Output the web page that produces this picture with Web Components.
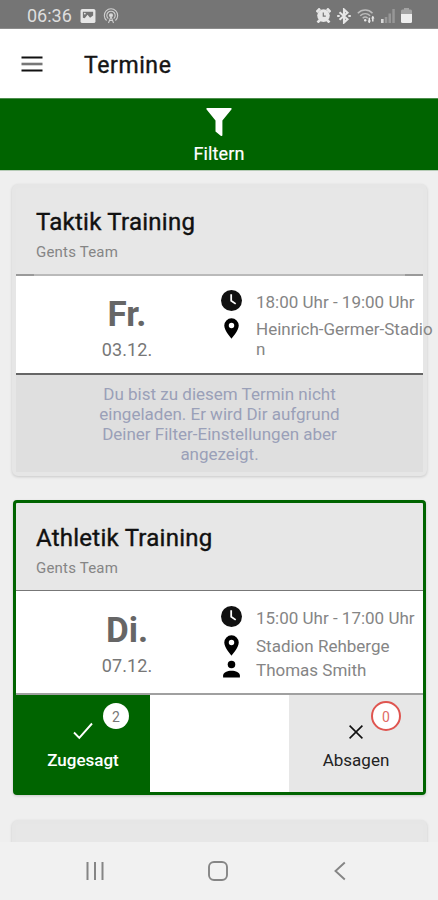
<!DOCTYPE html>
<html lang="de">
<head>
<meta charset="utf-8">
<meta name="viewport" content="width=device-width, initial-scale=1">
<title>Termine</title>
<style>
  html, body {
    margin: 0;
    height: 100%;
    overflow: hidden;
  }

  body {
    --green: #006400;
    --surface: #e7e7e7;
    font-family: Roboto, "Liberation Sans", sans-serif;
    background: #efefef;
    color: #111;
  }
</style>
</head>
<body>
<team-app>
  <status-bar slot="top" time="06:36"></status-bar>
  <app-header slot="top">Termine</app-header>
  <filter-bar slot="top">Filtern</filter-bar>

  <event-card heading="Taktik Training" team="Gents Team" day="Fr." date="03.12.">
    <event-detail icon="clock">18:00 Uhr - 19:00 Uhr</event-detail>
    <event-detail icon="pin">Heinrich-Germer-Stadion</event-detail>
    <event-note slot="footer">Du bist zu diesem Termin nicht eingeladen. Er wird Dir aufgrund Deiner Filter-Einstellungen aber angezeigt.</event-note>
  </event-card>

  <event-card accepted heading="Athletik Training" team="Gents Team" day="Di." date="07.12.">
    <event-detail icon="clock">15:00 Uhr - 17:00 Uhr</event-detail>
    <event-detail icon="pin">Stadion Rehberge</event-detail>
    <event-detail icon="person">Thomas Smith</event-detail>
    <reply-button slot="footer" kind="yes" count="2">Zugesagt</reply-button>
    <reply-button slot="footer" kind="no" count="0">Absagen</reply-button>
  </event-card>

  <event-card heading="" team="" day="" date=""></event-card>

  <nav-bar slot="bottom"></nav-bar>
</team-app>

<script>
const ICONS = {
  menu: `<svg viewBox="0 0 24 22"><path d="M1.500 3.500h21M1.500 16.500h21" stroke="#111" stroke-width="2"/><path d="M1.500 10h21" stroke="#777" stroke-width="2.600"/></svg>`,
  picture: `<svg viewBox="0 0 16 15"><rect width="16" height="15" rx="2" fill="#e6e6e6"/><path d="M2.500 9.500V3h11v4l-3.300 2.500-2.700-3.300-3 3.600z" fill="#757575"/><circle cx="4.600" cy="4.900" r="1" fill="#e6e6e6"/></svg>`,
  cast: `<svg viewBox="0 0 16 16" fill="none" stroke="#d0d0d0" stroke-width="1.100"><path d="M3.600 12.500a6.700 6.700 0 1 1 8.800 0M5.300 10.600a4.200 4.200 0 1 1 5.400 0"/><circle cx="8" cy="7.300" r="1.500" fill="#e0e0e0"/><path d="M8 8.500L5.500 15M8 8.500l2.500 6.500M6.500 12.500h3"/></svg>`,
  alarm: `<svg viewBox="0 0 15 15"><path d="M.5 4L4 .5M14.500 4L11 .5M1.500 14.500l3-3M13.500 14.500l-3-3" stroke="#e6e6e6" stroke-width="2.600"/><circle cx="7.500" cy="7.600" r="6.300" fill="#e6e6e6"/><path d="M7.300 4.500v3.600h2.500" fill="none" stroke="#757575" stroke-width="1.200"/></svg>`,
  bluetooth: `<svg viewBox="0 0 14 16" fill="none" stroke="#e6e6e6" stroke-width="2.100"><path d="M2.500 4.200l8 7L7 14.500v-13l3.500 3.300-8 7"/><path d="M.2 8h2.500M11.300 8h2.500"/></svg>`,
  wifi: `<svg viewBox="0 0 18 16" fill="none" stroke="#bdbdbd" stroke-width="1.500"><path d="M.8 5.300C5 1 11.500 1 15.500 5.300M3.200 7.800c3-2.800 7-2.800 10 0M5.700 10.200c1.500-1.400 3.500-1.400 5 0"/><circle cx="8.200" cy="12.300" r="1.200" fill="#e6e6e6" stroke="none"/><path d="M12.300 14.800v-5M15.800 8.500v5" stroke="#e6e6e6"/><path d="M10.600 12.500h3.400l-1.700 2.700zM14.100 10.500h3.400l-1.700-2.700z" fill="#e6e6e6" stroke="none"/></svg>`,
  signal: `<svg viewBox="0 0 14 15"><path d="M0 11h2.600v4H0z" fill="#d8d8d8"/><path d="M3.800 9h2.500v6H3.800zM7.500 5.500H10V15H7.500zM11.300 1h2.500v14h-2.500z" fill="#979797"/></svg>`,
  battery: `<svg viewBox="0 0 11 15"><path d="M3 0h5v1.500h1.500Q11 1.500 11 3v3H0V3q0-1.500 1.500-1.500H3z" fill="#a3a3a3"/><path d="M0 6h11v7.500q0 1.500-1.500 1.500h-8Q0 15 0 13.500z" fill="#eee"/></svg>`,
  funnel: `<svg viewBox="0 0 26 28"><path d="M.8 0h24.400q.8.800.2 1.600L16.400 12.500v15q-.8.900-1.700.2l-5.200-4.200v-11L.6 1.600Q0 .8.800 0z" fill="#fff"/></svg>`,
  clock: `<svg viewBox="0 0 20 20"><circle cx="10" cy="10" r="10" fill="#111"/><path d="M9.700 4v6.200l4.300 3" fill="none" stroke="#fff" stroke-width="1.700"/></svg>`,
  pin: `<svg viewBox="0 0 20 20"><path fill="#000" fill-rule="evenodd" d="M10 .3a6.900 6.900 0 0 0-6.900 6.900C3.100 12.200 10 19.700 10 19.700S16.900 12.200 16.900 7.200A6.900 6.900 0 0 0 10 .3zm0 4.200a2.600 2.600 0 1 1 0 5.200 2.600 2.600 0 0 1 0-5.200z"/></svg>`,
  person: `<svg viewBox="0 0 20 20"><circle cx="10" cy="5.200" r="3.600" fill="#000"/><path d="M2 17.500v-1.800c0-2.700 4-4.500 8-4.500s8 1.800 8 4.500v1.800z" fill="#000"/></svg>`,
  check: `<svg viewBox="0 0 20 18"><path d="M1 10.500l5.300 5.300L19 1.500" fill="none" stroke="#fff" stroke-width="1.900"/></svg>`,
  cross: `<svg viewBox="0 0 14 14"><path d="M.6.600l12.800 12.800M13.400.600L.600 13.400" stroke="#111" stroke-width="1.600"/></svg>`,
  recents: `<svg viewBox="0 0 20 20"><path d="M2.500 1v18M10 1v18M17.500 1v18" stroke="#858585" stroke-width="2"/></svg>`,
  home: `<svg viewBox="0 0 20 20"><rect x="1" y="1" width="18" height="18" rx="5" fill="none" stroke="#858585" stroke-width="1.900"/></svg>`,
  back: `<svg viewBox="0 0 12 20"><path d="M10.800 1.500L1.500 10l9.300 8.500" fill="none" stroke="#858585" stroke-width="1.900"/></svg>`,
};

class AppIcon extends HTMLElement {
  connectedCallback() {
    if (this.shadowRoot) {
      return;
    }

    this.attachShadow({ mode: "open" }).innerHTML = `
      <style>
        :host {
          display: block;
          flex: none;
        }

        svg {
          display: block;
          width: 100%;
          height: 100%;
        }
      </style>
      ${ICONS[this.getAttribute("name")]}
    `;
  }
}

class TeamApp extends HTMLElement {
  connectedCallback() {
    this.attachShadow({ mode: "open" }).innerHTML = `
      <style>
        :host {
          display: flex;
          flex-direction: column;
          height: 100vh;
        }

        main {
          flex: 1;
          min-height: 0;
          overflow: hidden;
          display: flex;
          flex-direction: column;
          padding: 13px 11px 0 12px;
        }
      </style>

      <slot name="top"></slot>
      <main><slot></slot></main>
      <slot name="bottom"></slot>
    `;
  }
}

class StatusBar extends HTMLElement {
  connectedCallback() {
    this.attachShadow({ mode: "open" }).innerHTML = `
      <style>
        :host {
          display: flex;
          align-items: center;
          flex: none;
          height: 29px;
          box-sizing: border-box;
          padding: 3px 26px 0 27px;
          background: #757575;
          border-bottom: 1px solid #8c8c8c;
          color: #dedede;
        }

        .time {
          width: 53px;
          font-size: 18px;
          line-height: 20px;
        }

        .left, .right {
          display: flex;
          align-items: center;
          gap: 7px;
        }

        .right {
          margin-left: auto;
          gap: 6px;
        }
      </style>

      <span class="time">${this.getAttribute("time")}</span>
      <div class="left">
        <app-icon name="picture" style="width:16px;height:14px"></app-icon>
        <app-icon name="cast" style="width:16px;height:16px"></app-icon>
      </div>
      <div class="right">
        <app-icon name="alarm" style="width:15px;height:15px"></app-icon>
        <app-icon name="bluetooth" style="width:14px;height:16px"></app-icon>
        <app-icon name="wifi" style="width:18px;height:16px"></app-icon>
        <app-icon name="signal" style="width:14px;height:15px"></app-icon>
        <app-icon name="battery" style="width:11px;height:15px"></app-icon>
      </div>
    `;
  }
}

class AppHeader extends HTMLElement {
  connectedCallback() {
    this.attachShadow({ mode: "open" }).innerHTML = `
      <style>
        :host {
          display: flex;
          align-items: center;
          flex: none;
          height: 69px;
          box-sizing: border-box;
          padding: 4px 20px 0;
          gap: 40px;
          background: #fff;
          color: #151515;
        }

        app-icon {
          width: 24px;
          height: 22px;
          margin-top: -1px;
        }

        h1 {
          margin: 0;
          font-size: 23px;
          line-height: 28px;
          font-weight: 400;
          letter-spacing: 0.6px;
          -webkit-text-stroke: 0.4px currentColor;
        }
      </style>

      <app-icon name="menu"></app-icon>
      <h1><slot></slot></h1>
    `;
  }
}

class FilterBar extends HTMLElement {
  connectedCallback() {
    this.attachShadow({ mode: "open" }).innerHTML = `
      <style>
        :host {
          display: flex;
          flex-direction: column;
          align-items: center;
          flex: none;
          height: 73px;
          box-sizing: border-box;
          padding-top: 9px;
          background: var(--green);
          border-top: 1px solid #4d8e4d;
          border-bottom: 1px solid #b6cbb6;
          color: #fff;
        }

        app-icon {
          width: 26px;
          height: 28px;
        }

        .label {
          margin-top: 8px;
          font-size: 18px;
          line-height: 20px;
          letter-spacing: 0.1px;
          -webkit-text-stroke: 0.2px currentColor;
        }
      </style>

      <app-icon name="funnel"></app-icon>
      <span class="label"><slot></slot></span>
    `;
  }
}

class EventCard extends HTMLElement {
  connectedCallback() {
    const text = (name) => this.getAttribute(name);

    this.attachShadow({ mode: "open" }).innerHTML = `
      <style>
        :host {
          --detail-gap: 7px;
          display: block;
          flex: none;
          box-sizing: border-box;
          height: 292px;
          margin-bottom: 24px;
          border: 4px solid #e6e6e6;
          border-radius: 6px;
          background: var(--surface);
          box-shadow: 0 1px 3px rgba(0, 0, 0, 0.16);
        }

        :host([accepted]) {
          --detail-gap: 8px;
          height: 295px;
          margin: 0 1px 25px;
          border: 3px solid var(--green);
          border-radius: 4px;
        }

        header {
          height: 91px;
          margin-top: -3px;
          padding: 22px 20px 0;
          box-sizing: border-box;
          border-bottom: 2px solid;
          border-image: linear-gradient(90deg, #9a9a9a 20px, #bababa 20px calc(100% - 20px), #9a9a9a calc(100% - 20px)) 2;
        }

        :host([accepted]) header {
          height: 88px;
          margin-top: 0;
          padding-top: 20px;
          border-image: none;
          border-bottom: 1px solid #777;
        }

        h2 {
          margin: 0;
          font-size: 24px;
          line-height: 30px;
          font-weight: 400;
          letter-spacing: 0.25px;
          -webkit-text-stroke: 0.4px currentColor;
          color: #111;
        }

        .team {
          margin: 6px 0 0;
          font-size: 15px;
          line-height: 18px;
          letter-spacing: 0.2px;
          color: #858585;
        }

        .body {
          display: flex;
          height: 99px;
          box-sizing: border-box;
          background: #fff;
          border-bottom: 2px solid #666;
        }

        :host([accepted]) .body {
          height: 104px;
          border-bottom: 2px solid #a0a0a0;
        }

        .when {
          flex: 0 0 205px;
          box-sizing: border-box;
          padding: 18px 0 0 17px;
          text-align: center;
        }

        :host([accepted]) .when {
          padding-top: 19px;
        }

        .day {
          font-size: 35px;
          line-height: 42px;
          font-weight: 700;
          color: #666;
        }

        .date {
          margin-top: 4px;
          font-size: 18px;
          line-height: 20px;
          letter-spacing: 0.1px;
          color: #777;
        }

        .details {
          display: flex;
          flex-direction: column;
          flex: none;
          width: 214px;
          padding-top: 16px;
        }

        :host([accepted]) .details {
          padding-top: 17px;
        }

        .footer {
          display: flex;
          justify-content: space-between;
          height: 97px;
        }

        :host([accepted]) .footer {
          background: #fff;
        }
      </style>

      <header>
        <h2>${text("heading")}</h2>
        <p class="team">${text("team")}</p>
      </header>
      <div class="body">
        <div class="when">
          <div class="day">${text("day")}</div>
          <div class="date">${text("date")}</div>
        </div>
        <div class="details"><slot></slot></div>
      </div>
      <div class="footer"><slot name="footer"></slot></div>
    `;
  }
}

class EventDetail extends HTMLElement {
  connectedCallback() {
    const icon = this.getAttribute("icon");

    this.attachShadow({ mode: "open" }).innerHTML = `
      <style>
        :host {
          display: flex;
          align-items: flex-start;
          gap: 14px;
          margin-bottom: var(--detail-gap);
          color: #858585;
          font-size: 17px;
          line-height: 20px;
        }

        :host([icon="pin"]) {
          margin-bottom: 4px;
        }

        app-icon {
          width: 21px;
          height: 21px;
          margin-top: -2px;
        }

        :host([icon="pin"]) app-icon,
        :host([icon="person"]) app-icon {
          margin-top: -1px;
        }

        .text {
          flex: 1;
          min-width: 0;
          word-break: break-all;
        }
      </style>

      <app-icon name="${icon}"></app-icon>
      <span class="text"><slot></slot></span>
    `;
  }
}

class EventNote extends HTMLElement {
  connectedCallback() {
    this.attachShadow({ mode: "open" }).innerHTML = `
      <style>
        :host {
          display: block;
          flex: 1;
          box-sizing: border-box;
          padding: 9px 76px 0;
          background: #dfdfdf;
          color: #9aa0b8;
          font-size: 17px;
          line-height: 20px;
          text-align: center;
        }
      </style>

      <slot></slot>
    `;
  }
}

class ReplyButton extends HTMLElement {
  connectedCallback() {
    const accepted = this.getAttribute("kind") === "yes";

    this.attachShadow({ mode: "open" }).innerHTML = `
      <style>
        :host {
          display: block;
          width: 134px;
        }

        button {
          position: relative;
          display: flex;
          flex-direction: column;
          align-items: center;
          width: 100%;
          height: 100%;
          padding: 27px 0 0;
          border: none;
          background: var(--surface);
          color: #222;
          font: inherit;
          font-size: 17px;
          line-height: 22px;
        }

        :host([kind="yes"]) button {
          background: var(--green);
          color: #fff;
          font-weight: 500;
        }

        app-icon {
          width: 20px;
          height: 18px;
        }

        :host([kind="no"]) app-icon {
          width: 14px;
          height: 14px;
          margin: 3px 0 1px;
        }

        .label {
          margin-top: 9px;
        }

        .count {
          position: absolute;
          top: 8px;
          right: 21px;
          width: 26px;
          height: 26px;
          border-radius: 50%;
          background: #fff;
          color: #777;
          font-size: 14px;
          font-weight: 400;
          line-height: 28px;
          text-align: center;
        }

        :host([kind="no"]) .count {
          top: 6px;
          right: 22px;
          border: 2px solid #df5550;
          color: #df6b66;
        }
      </style>

      <button type="button">
        <app-icon name="${accepted ? "check" : "cross"}"></app-icon>
        <span class="label"><slot></slot></span>
        <span class="count">${this.getAttribute("count")}</span>
      </button>
    `;
  }
}

class NavBar extends HTMLElement {
  connectedCallback() {
    this.attachShadow({ mode: "open" }).innerHTML = `
      <style>
        :host {
          display: flex;
          align-items: center;
          justify-content: space-between;
          flex: none;
          height: 58px;
          box-sizing: border-box;
          padding: 0 92px 0 85px;
          background: #f1f1f1;
        }

        app-icon {
          width: 20px;
          height: 20px;
        }

        app-icon[name="home"] {
          margin-right: 4px;
        }

        app-icon[name="back"] {
          width: 12px;
        }
      </style>

      <app-icon name="recents"></app-icon>
      <app-icon name="home"></app-icon>
      <app-icon name="back"></app-icon>
    `;
  }
}

customElements.define("app-icon", AppIcon);
customElements.define("team-app", TeamApp);
customElements.define("status-bar", StatusBar);
customElements.define("app-header", AppHeader);
customElements.define("filter-bar", FilterBar);
customElements.define("event-card", EventCard);
customElements.define("event-detail", EventDetail);
customElements.define("event-note", EventNote);
customElements.define("reply-button", ReplyButton);
customElements.define("nav-bar", NavBar);
</script>
</body>
</html>
